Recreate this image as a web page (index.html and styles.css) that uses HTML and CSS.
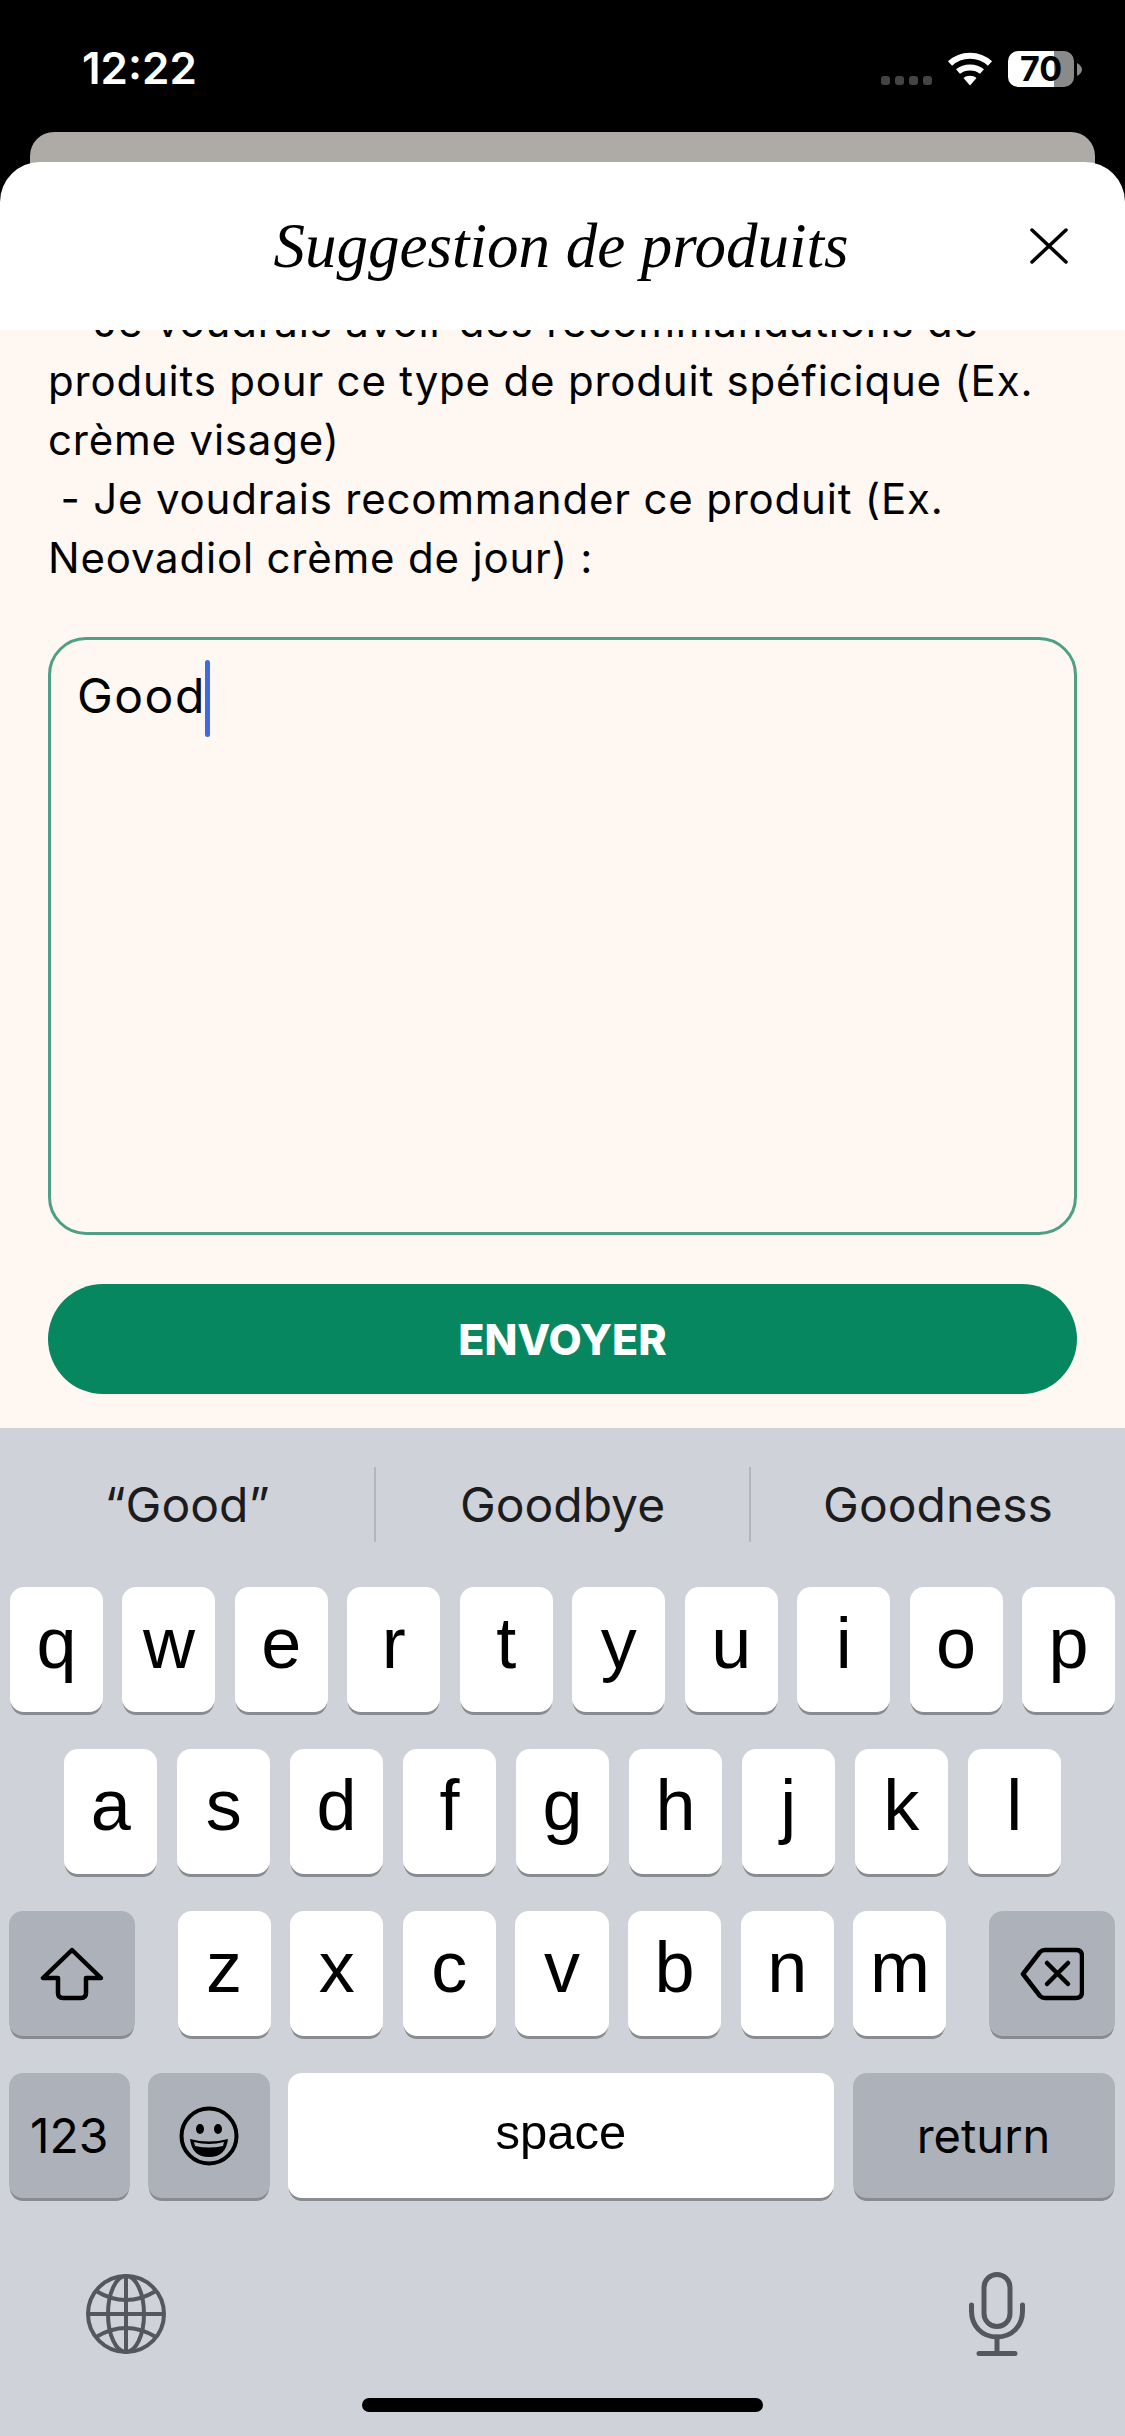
FILE: index.html
```html
<!DOCTYPE html>
<html lang="fr">
<head>
  <meta charset="UTF-8">
  <meta name="viewport" content="width=device-width, initial-scale=1.0">
  <title>Suggestion de produits</title>
  <link rel="stylesheet" href="styles.css">
</head>
<body>
  <div class="status-bar">
    <span class="time">12:22</span>
    <div class="status-icons">
      <div class="signal"><i></i><i></i><i></i><i></i></div>
      <svg class="wifi" width="46" height="34" viewBox="0 0 46 34" fill="none" stroke="#fff" stroke-width="6">
        <path d="M3 11.5 C14 1 32 1 43 11.5"/>
        <path d="M11 19.5 C17.500 14 28.500 14 35 19.500"/>
        <path d="M23 33.500 L16.500 26 C20 23 26 23 29.500 26 Z" fill="#fff" stroke="none"/>
      </svg>
      <div class="battery"><span>70</span></div>
      <svg class="battery-nub" width="5" height="13" viewBox="0 0 5 13"><path d="M0 0 Q5 3 5 6.500 Q5 10 0 13 Z" fill="#8a8a8a"/></svg>
    </div>
  </div>

  <div class="back-card"></div>

  <div class="sheet">
    <div class="sheet-header">
      <h1>Suggestion de produits</h1>
      <svg class="close" width="38" height="36" viewBox="0 0 38 36" fill="none" stroke="#000" stroke-width="3.500" stroke-linecap="round">
        <path d="M2 2 L36 34 M36 2 L2 34"/>
      </svg>
    </div>
    <div class="sheet-body">
      <p class="intro">&nbsp;- Je voudrais avoir des recommandations de produits pour ce type de produit spéficique (Ex. crème visage)<br>
      &nbsp;- Je voudrais recommander ce produit (Ex. Neovadiol crème de jour) :</p>
      <div class="message">Good<span class="caret"></span></div>
      <button class="send">ENVOYER</button>
    </div>
  </div>

  <div class="keyboard">
    <div class="suggestions">
      <span>“Good”</span>
      <span>Goodbye</span>
      <span>Goodness</span>
    </div>
    <div class="row row-top">
      <div class="key">q</div><div class="key">w</div><div class="key">e</div><div class="key">r</div><div class="key">t</div>
      <div class="key">y</div><div class="key">u</div><div class="key">i</div><div class="key">o</div><div class="key">p</div>
    </div>
    <div class="row row-home">
      <div class="key">a</div><div class="key">s</div><div class="key">d</div><div class="key">f</div><div class="key">g</div>
      <div class="key">h</div><div class="key">j</div><div class="key">k</div><div class="key">l</div>
    </div>
    <div class="row row-shift">
      <div class="key key-dark key-side">
        <svg width="64" height="54" viewBox="0 0 64 54" fill="none" stroke="#000" stroke-width="4.500" stroke-linejoin="round">
          <path d="M32 3 L3 31 H18 V46 Q18 51 23 51 H41 Q46 51 46 46 V31 H61 Z"/>
        </svg>
      </div>
      <div class="letters">
        <div class="key">z</div><div class="key">x</div><div class="key">c</div><div class="key">v</div>
        <div class="key">b</div><div class="key">n</div><div class="key">m</div>
      </div>
      <div class="key key-dark key-side">
        <svg width="64" height="54" viewBox="0 0 64 54" fill="none" stroke="#000" stroke-width="4.500" stroke-linecap="round" stroke-linejoin="round">
          <path d="M3 27 L20 5 Q22 3 25 3 H56 Q62 3 62 9 V45 Q62 51 56 51 H25 Q22 51 20 49 Z"/>
          <path d="M27 16 L48 37 M48 16 L27 37"/>
        </svg>
      </div>
    </div>
    <div class="row row-bottom">
      <div class="key key-dark key-num">123</div>
      <div class="key key-dark key-emoji">
        <svg width="60" height="60" viewBox="0 0 60 60">
          <circle cx="30" cy="30" r="27.500" fill="none" stroke="#000" stroke-width="4"/>
          <ellipse cx="21" cy="23" rx="4" ry="5"/>
          <ellipse cx="39" cy="23" rx="4" ry="5"/>
          <path d="M11 33 Q30 38 49 33 Q47 51 30 51 Q13 51 11 33 Z"/>
          <path d="M15 36 Q30 40 45 36 L44 40 Q30 43 16 40 Z" fill="#adb1b9"/>
        </svg>
      </div>
      <div class="key key-space">space</div>
      <div class="key key-dark key-return">return</div>
    </div>
    <div class="keyboard-tools">
      <svg width="80" height="80" viewBox="0 0 80 80" fill="none" stroke="#54575c" stroke-width="4">
        <circle cx="40" cy="40" r="38"/>
        <ellipse cx="40" cy="40" rx="18" ry="38"/>
        <path d="M40 2 V78 M2 40 H78"/>
        <path d="M10 17 Q40 35 70 17 M10 63 Q40 45 70 63"/>
      </svg>
      <svg width="56" height="84" viewBox="0 0 56 84" fill="none" stroke="#54575c" stroke-width="5" stroke-linecap="round">
        <rect x="15" y="2.500" width="26" height="52" rx="13"/>
        <path d="M2.500 33 V39 C2.500 54 13 65 28 65 C43 65 53.500 54 53.500 39 V33"/>
        <path d="M28 65 V81 M10 81.500 H46"/>
      </svg>
    </div>
    <div class="home-indicator"></div>
  </div>
</body>
</html>
```

FILE: styles.css
```css
body {
  margin: 0;
  width: 1125px;
  height: 2436px;
  overflow: hidden;
  background: #000;
  font-family: Inter, "Liberation Sans", sans-serif;
  color: #000;
}
.status-bar {
  height: 132px;
  box-sizing: border-box;
  padding: 44px 43px 0 82px;
  display: flex;
  justify-content: space-between;
  align-items: flex-start;
  color: #fff;
}
.time {
  font-size: 44px;
  line-height: 48px;
  font-weight: 600;
}
.status-icons {
  display: flex;
  align-items: flex-start;
  padding-top: 7px;
}
.signal {
  display: flex;
  gap: 5px;
  margin-top: 25px;
  margin-right: 15px;
}
.signal i {
  width: 9px;
  height: 9px;
  border-radius: 3px;
  background: #444;
}
.wifi {
  margin-top: 1px;
  margin-right: 15px;
}
.battery {
  width: 66px;
  height: 36px;
  border-radius: 10px;
  background: linear-gradient(90deg, #fff 46px, #8a8a8a 46px);
  color: #000;
  font-size: 34px;
  font-weight: 700;
  line-height: 36px;
  text-align: center;
}
.battery-nub {
  margin-top: 12px;
  margin-left: 3px;
}
.back-card {
  height: 60px;
  margin: 0 30px;
  border-radius: 24px 24px 0 0;
  background: #aeaba7;
}
.sheet {
  height: 1266px;
  margin-top: -30px;
  position: relative;
  display: flex;
  flex-direction: column;
}
.sheet-header {
  height: 168px;
  flex: none;
  box-sizing: border-box;
  padding: 0 57px 0 0;
  display: flex;
  align-items: center;
  background: #fff;
  border-radius: 40px 40px 0 0;
}
.sheet-header h1 {
  flex: 1;
  margin: 0;
  padding-left: 92px;
  text-align: center;
  font-family: "Liberation Serif", serif;
  font-style: italic;
  font-weight: 400;
  font-size: 63px;
  line-height: 80px;
}
.sheet-body {
  flex: 1;
  overflow: hidden;
  padding: 0 48px 0 48px;
  background: #fff8f2;
}
.intro {
  margin: -38px 0 0;
  font-size: 42px;
  letter-spacing: 0.800px;
  line-height: 59px;
}
.message {
  height: 598px;
  box-sizing: border-box;
  margin-top: 50px;
  padding: 20px 26px;
  border: 3px solid #4f9f86;
  border-radius: 38px;
  font-size: 48px;
  letter-spacing: 1.500px;
  line-height: 72px;
}
.caret {
  display: inline-block;
  width: 5px;
  height: 77px;
  margin-left: -1px;
  vertical-align: -24px;
  border-radius: 3px;
  background: #4169e1;
}
.send {
  display: block;
  width: 100%;
  height: 110px;
  margin-top: 49px;
  border: none;
  border-radius: 55px;
  background: #07875f;
  color: #fff;
  font-family: Inter, "Liberation Sans", sans-serif;
  font-size: 43px;
  font-weight: 800;
}
.keyboard {
  height: 1008px;
  background: #d0d2d9;
  font-family: "Liberation Sans", Arial, sans-serif;
}
.suggestions {
  height: 159px;
  box-sizing: border-box;
  padding-top: 39px;
  display: grid;
  grid-template-columns: 374px 375px 376px;
  font-family: Inter, "Liberation Sans", sans-serif;
  font-size: 48px;
  color: #1c1c1e;
}
.suggestions span {
  height: 75px;
  line-height: 75px;
  text-align: center;
}
.suggestions span + span {
  border-left: 2px solid #b4b6bc;
}
.row {
  display: flex;
  gap: 19.500px;
  height: 129px;
  margin-bottom: 33px;
}
.row-top {
  padding: 0 10px;
}
.row-home {
  padding: 0 64px;
}
.row-shift {
  padding: 0 10px 0 9px;
  justify-content: space-between;
  gap: 0;
}
.letters {
  display: flex;
  gap: 19.500px;
  width: 769px;
}
.row-bottom {
  padding: 0 10px 0 9px;
  gap: 18.500px;
}
.key {
  flex: 1;
  height: 125px;
  display: flex;
  align-items: center;
  justify-content: center;
  border-radius: 14px;
  background: #fff;
  box-shadow: 0 4px 0 -1px #8a8b90;
  font-size: 72px;
  padding-bottom: 14px;
  box-sizing: border-box;
}
.key-dark {
  background: #adb1b9;
  padding-bottom: 0;
}
.key-side {
  flex: none;
  width: 126px;
}
.key-num {
  flex: none;
  width: 120.500px;
  font-family: Inter, "Liberation Sans", sans-serif;
  font-size: 48px;
}
.key-emoji {
  flex: none;
  width: 121.500px;
}
.key-space {
  flex: none;
  width: 546px;
  font-size: 49px;
  padding-bottom: 8px;
}
.key-return {
  flex: none;
  width: 262px;
  font-family: Inter, "Liberation Sans", sans-serif;
  font-size: 47px;
}
.keyboard-tools {
  display: flex;
  justify-content: space-between;
  align-items: center;
  padding: 0 100px 0 86px;
  height: 84px;
  margin-top: 70px;
}
.home-indicator {
  width: 401px;
  height: 14px;
  margin: 42px auto 0;
  border-radius: 7px;
  background: #000;
}
```
